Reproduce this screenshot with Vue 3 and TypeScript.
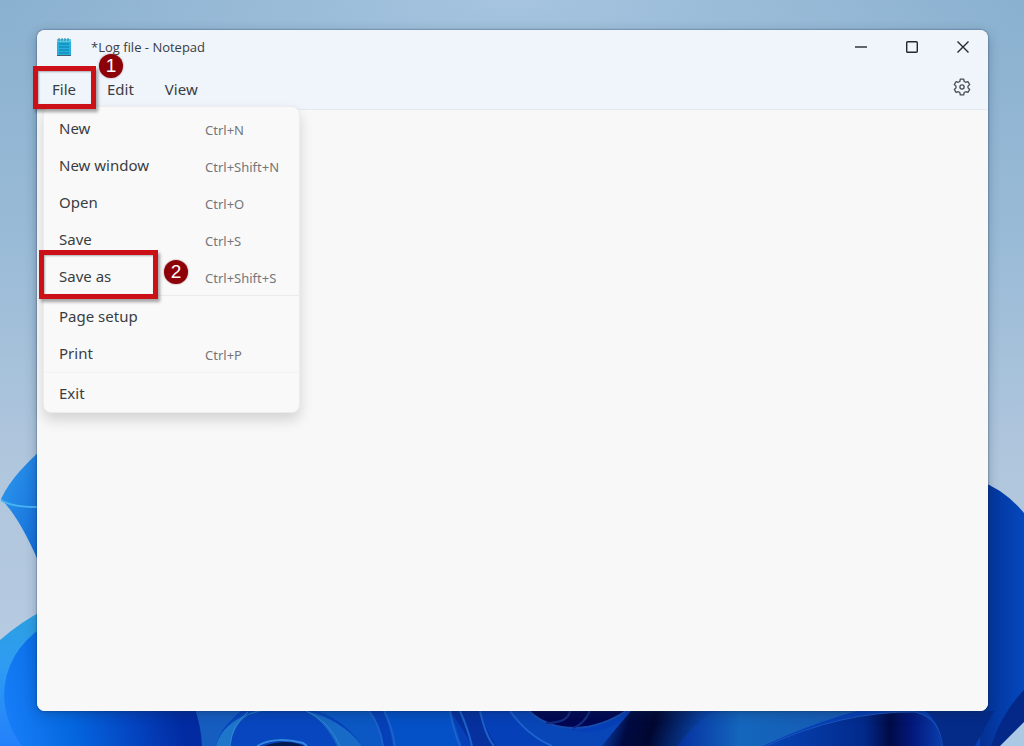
<script setup lang="ts">
interface Command {
  label: string
  keys?: string
  marked?: boolean
}

const groups: Command[][] = [
  [
    { label: 'New', keys: 'Ctrl+N' },
    { label: 'New window', keys: 'Ctrl+Shift+N' },
    { label: 'Open', keys: 'Ctrl+O' },
    { label: 'Save', keys: 'Ctrl+S' },
    { label: 'Save as', keys: 'Ctrl+Shift+S', marked: true },
  ],
  [{ label: 'Page setup' }, { label: 'Print', keys: 'Ctrl+P' }],
  [{ label: 'Exit' }],
]
</script>

<template>
  <div class="desktop">
    <svg class="wallpaper" viewBox="0 0 1024 746" preserveAspectRatio="none" aria-hidden="true">
      <defs>
        <linearGradient id="sky" x1="0" y1="0" x2="0" y2="1">
          <stop offset="0" stop-color="#8ab1d0" />
          <stop offset="0.3" stop-color="#98bad6" />
          <stop offset="0.62" stop-color="#b0c6dd" />
          <stop offset="1" stop-color="#b9cde2" />
        </linearGradient>
        <radialGradient id="haze" cx="0.5" cy="0" r="0.5">
          <stop offset="0" stop-color="#a6c4df" />
          <stop offset="1" stop-color="#a6c4df" stop-opacity="0" />
        </radialGradient>
        <linearGradient id="petal" x1="0" y1="0" x2="1" y2="1">
          <stop offset="0" stop-color="#2f9df0" />
          <stop offset="1" stop-color="#0f62d2" />
        </linearGradient>
        <linearGradient id="base" gradientUnits="userSpaceOnUse" x1="0" y1="746" x2="240" y2="700">
          <stop offset="0" stop-color="#1b82fb" />
          <stop offset="0.3" stop-color="#0467e0" />
          <stop offset="0.55" stop-color="#0444c0" />
          <stop offset="0.75" stop-color="#022ba2" />
          <stop offset="1" stop-color="#022ba2" />
        </linearGradient>
        <linearGradient id="right" x1="0" y1="0" x2="1" y2="0">
          <stop offset="0" stop-color="#033093" />
          <stop offset="1" stop-color="#0548bd" />
        </linearGradient>
        <linearGradient id="cyan" x1="0" y1="0" x2="0" y2="1">
          <stop offset="0" stop-color="#2b9fe0" />
          <stop offset="0.4" stop-color="#2f9cf2" />
          <stop offset="1" stop-color="#2380fb" />
        </linearGradient>
        <linearGradient id="glow" x1="0" y1="0" x2="1" y2="0">
          <stop offset="0" stop-color="#0631a0" />
          <stop offset="0.35" stop-color="#1466bd" />
          <stop offset="1" stop-color="#1759b4" />
        </linearGradient>
        <linearGradient id="dusk" x1="0" y1="0" x2="1" y2="0">
          <stop offset="0" stop-color="#0744b4" />
          <stop offset="0.55" stop-color="#022a8c" />
          <stop offset="0.7" stop-color="#010b47" />
          <stop offset="0.82" stop-color="#03177a" />
          <stop offset="1" stop-color="#0a3fae" />
        </linearGradient>
        <linearGradient id="night" gradientUnits="userSpaceOnUse" x1="606" y1="715" x2="698" y2="745">
          <stop offset="0" stop-color="#0741b0" />
          <stop offset="0.25" stop-color="#000a42" />
          <stop offset="0.5" stop-color="#000730" />
          <stop offset="1" stop-color="#0a47ae" />
        </linearGradient>
      </defs>
      <rect width="1024" height="746" fill="url(#sky)" />
      <rect width="1024" height="300" fill="url(#haze)" />
      <path d="M44 447C27 463 10 479 1 499Q22 520 44 575Z" fill="url(#petal)" />
      <path d="M1 500Q13 508 44 507" fill="none" stroke="#48b5f4" stroke-width="2" />
      <path d="M0 640Q22 621 44 610V746H0Z" fill="url(#cyan)" />
      <path d="M200 700H1024V746H200Z" fill="#0640b8" />
      <path d="M44 626Q5 652 4 695Q5 724 22 746H210V700H44Z" fill="url(#base)" />
      <path d="M980 481Q1005 490 1024 513V746H980Z" fill="url(#right)" />
      <path d="M1024 690Q1003 711 991 746H1024Z" fill="#032887" />
      <path d="M1024 722L1000 746H1024Z" fill="#abc9e5" />
      <path d="M194 706H248Q222 724 216 746H202Q201 725 194 706Z" fill="#165dc0" />
      <path d="M216 746Q221 723 246 711H316Q343 721 357 746H304Q300 741 284 740Q269 740 259 746Z" fill="#0746bf" />
      <path d="M230 746Q233 725 248 715L262 711H256Q222 722 216 746Z" fill="#1d76ca" />
      <path d="M306 711Q343 720 362 746H337Q326 722 306 711Z" fill="#176ac6" />
      <path d="M248 712Q232 724 230 746M306 711Q329 721 340 746" fill="none" stroke="#3386d2" stroke-width="1" />
      <path d="M257 746Q275 736 303 743L307 746" fill="none" stroke="#3385dd" stroke-width="2" />
      <path d="M264 746Q286 738 304 746Z" fill="#00194f" />
      <path d="M316 711H369Q380 725 383 746H362Q345 720 316 711Z" fill="#0b58c4" />
      <path d="M384 711H450Q456 727 462 746H393Q389 724 384 711Z" fill="#0450c6" />
      <path d="M450 711H480Q486 730 496 746H472Q462 727 450 711Z" fill="#06309e" />
      <path d="M369 711Q380 725 383 746M384 711Q392 726 395 746M450 711Q454 732 460 746M460 711Q468 729 472 746M480 711Q486 737 494 746" fill="none" stroke="#1b62ca" stroke-width="2" />
      <path d="M510 711H540Q585 753 635 711L606 746H550Q530 735 510 711Z" fill="#0845b7" />
      <path d="M510 711Q527 735 552 746" fill="none" stroke="#1c63cd" stroke-width="2" />
      <path d="M529 711H626Q602 727 575 728Q547 728 529 711Z" fill="#000752" />
      <path d="M529 711Q547 728 575 728Q602 727 626 711" fill="none" stroke="#174caf" stroke-width="2" />
      <path d="M570 711Q568 723 546 723M590 711Q584 724 573 728" fill="none" stroke="#132d84" stroke-width="2" />
      <path d="M631 711H714Q696 725 678 746H602Q612 733 631 711Z" fill="url(#night)" />
      <path d="M714 711H857Q821 721 788 735L763 746H678Q690 727 714 711Z" fill="url(#glow)" />
      <path d="M766 746Q842 711 915 712Q940 718 943 746Z" fill="url(#dusk)" />
      <path d="M766 746Q842 711 915 712Q940 718 943 746" fill="none" stroke="#1c55b8" stroke-width="1" />
      <path d="M925 711H994L975 746H943Q940 722 925 711Z" fill="#042b88" />
    </svg>

    <main class="window">
      <header class="chrome">
        <div class="titlebar">
          <svg class="app-icon" viewBox="0 0 16 20" aria-hidden="true">
            <path d="M1 2H15V19H1Z" fill="#27b0dc" />
            <path d="M1 2H15V5H1Z" fill="#5cc9e6" />
            <path d="M1 18H15V19H1Z" fill="#45606f" />
            <path d="M3 1V4M6 1V4M9 1V4M12 1V4" stroke="#2d7f94" stroke-width="1" />
            <path d="M3 7H13M3 10H13M3 13H13M3 16H13" stroke="#0b7cab" stroke-width="1" />
          </svg>
          <h1 class="title">*Log file - Notepad</h1>
          <div class="controls">
            <button type="button" aria-label="Minimize">
              <svg viewBox="0 0 14 14"><path d="M1 7H13" /></svg>
            </button>
            <button type="button" aria-label="Maximize">
              <svg viewBox="0 0 14 14"><rect x="1.7" y="1.7" width="10.6" height="10.6" rx="1" /></svg>
            </button>
            <button type="button" aria-label="Close">
              <svg viewBox="0 0 14 14"><path d="M1.5 1.5L12.5 12.5M12.5 1.5L1.5 12.5" /></svg>
            </button>
          </div>
        </div>

        <nav class="menubar">
          <div class="menu-host">
            <button type="button" class="menu-button" aria-expanded="true">File</button>
            <span class="frame frame-file"></span>
            <span class="badge badge-one">1</span>
            <div class="menu">
              <div v-for="(group, g) in groups" :key="g" class="group">
                <button
                  v-for="command in group"
                  :key="command.label"
                  type="button"
                  class="item"
                >
                  <span class="label">{{ command.label }}</span>
                  <span v-if="command.keys" class="keys">{{ command.keys }}</span>
                  <template v-if="command.marked">
                    <span class="frame frame-item"></span>
                    <span class="badge badge-two">2</span>
                  </template>
                </button>
              </div>
            </div>
          </div>
          <button type="button" class="menu-button">Edit</button>
          <button type="button" class="menu-button">View</button>
          <button type="button" class="settings" aria-label="Settings">
            <svg viewBox="0 0 18 18">
              <path d="M7.3 1.2H10.7L11.2 3.5L12.7 4.3L14.9 3.6L16.7 6.5L15 8.1V9.9L16.7 11.5L14.9 14.4L12.7 13.7L11.2 14.5L10.7 16.8H7.3L6.8 14.5L5.3 13.7L3.1 14.4L1.3 11.5L3 9.9V8.1L1.3 6.5L3.1 3.6L5.3 4.3L6.8 3.5Z" />
              <circle cx="9" cy="9" r="2.1" />
            </svg>
          </button>
        </nav>
      </header>
      <textarea class="editor" aria-label="Document text" spellcheck="false"></textarea>
    </main>
  </div>
</template>

<style>
body {
  margin: 0;
}
</style>

<style scoped>
.desktop {
  position: relative;
  box-sizing: border-box;
  display: flex;
  min-height: 100vh;
  padding: 30px 36px 35px 37px;
  overflow: hidden;
  font-family: "Noto Sans", "Open Sans", sans-serif;
  color: #3a3d42;
}

.wallpaper {
  position: absolute;
  inset: 0;
  width: 100%;
  height: 100%;
}

button {
  margin: 0;
  padding: 0;
  border: 0;
  background: none;
  font: inherit;
  color: inherit;
}

.window {
  position: relative;
  flex: 1;
  display: flex;
  flex-direction: column;
  min-width: 0;
  border-radius: 8px;
  background: #f8f8f8;
  box-shadow: 0 0 2px rgba(20, 40, 70, 0.7), 0 3px 12px rgba(20, 40, 70, 0.3);
}

.chrome {
  position: relative;
  z-index: 1;
  border-bottom: 1px solid #e6e9ee;
  border-radius: 8px 8px 0 0;
  background: #f0f4fb;
}

.titlebar {
  display: flex;
  align-items: center;
  height: 34px;
  padding-left: 19px;
}

.app-icon {
  width: 16px;
  height: 20px;
}

.title {
  flex: 1;
  margin: 0;
  padding-left: 19px;
  font-family: "Open Sans", "Noto Sans", sans-serif;
  font-size: 13px;
  line-height: 16px;
  font-weight: 400;
}

.controls {
  display: flex;
}

.controls button {
  display: grid;
  place-items: center;
  width: 51px;
  height: 32px;
}

.controls svg {
  width: 14px;
  height: 14px;
  fill: none;
  stroke: #24272b;
  stroke-width: 1.4;
}

.menubar {
  display: flex;
  align-items: center;
  height: 45px;
  padding-right: 10px;
}

.menu-host {
  position: relative;
}

.menu-button {
  height: 45px;
  padding: 4px 16px 0 15px;
  font-size: 15px;
  line-height: 20px;
}

.settings {
  display: grid;
  place-items: center;
  width: 32px;
  height: 32px;
  margin-left: auto;
}

.settings svg {
  width: 18px;
  height: 18px;
  fill: none;
  stroke: #484c52;
  stroke-width: 1.3;
  stroke-linejoin: round;
}

.menu {
  position: absolute;
  top: 42px;
  left: 6px;
  box-sizing: border-box;
  width: 257px;
  padding: 2px 0 1px;
  border: 1px solid #ececee;
  border-radius: 8px;
  background: #f9f9f9;
  box-shadow: 0 7px 14px rgba(0, 0, 0, 0.15);
}

.group + .group {
  margin-top: 1px;
  padding-top: 1px;
  border-top: 1px solid #ebebeb;
}

.group:last-child {
  border-top-color: #f3f3f3;
}

.item {
  position: relative;
  display: grid;
  grid-template-columns: 146px 1fr;
  align-items: center;
  width: 100%;
  height: 37px;
  padding-left: 15px;
  text-align: left;
  font-size: 15px;
  line-height: 20px;
}

.keys {
  padding-top: 4px;
  font-size: 13px;
  line-height: 16px;
  color: #74767a;
}

.frame {
  position: absolute;
  z-index: 1;
  box-sizing: border-box;
  border: 5px solid #cb1017;
  box-shadow: 2px 3px 3px rgba(0, 0, 0, 0.35), inset 1px 1px 2px rgba(0, 0, 0, 0.3);
  pointer-events: none;
}

.frame-file {
  top: 2px;
  left: -4px;
  width: 63px;
  height: 43px;
}

.frame-item {
  top: -7px;
  left: -5px;
  width: 119px;
  height: 49px;
}

.badge {
  position: absolute;
  width: 24px;
  height: 24px;
  border-radius: 50%;
  background: #8c0208;
  box-shadow: 0 0 2px rgba(90, 0, 0, 0.5);
  color: #fff;
  font-family: "Liberation Sans", Arial, sans-serif;
  font-size: 19px;
  line-height: 24px;
  text-align: center;
}

.badge-one {
  top: -10px;
  left: 62px;
}

.badge-two {
  top: 3px;
  left: 120px;
}

.editor {
  flex: 1;
  padding: 8px 16px;
  border: 0;
  border-radius: 0 0 8px 8px;
  outline: 0;
  resize: none;
  background: #f8f8f8;
  font: inherit;
  font-size: 14px;
}
</style>
